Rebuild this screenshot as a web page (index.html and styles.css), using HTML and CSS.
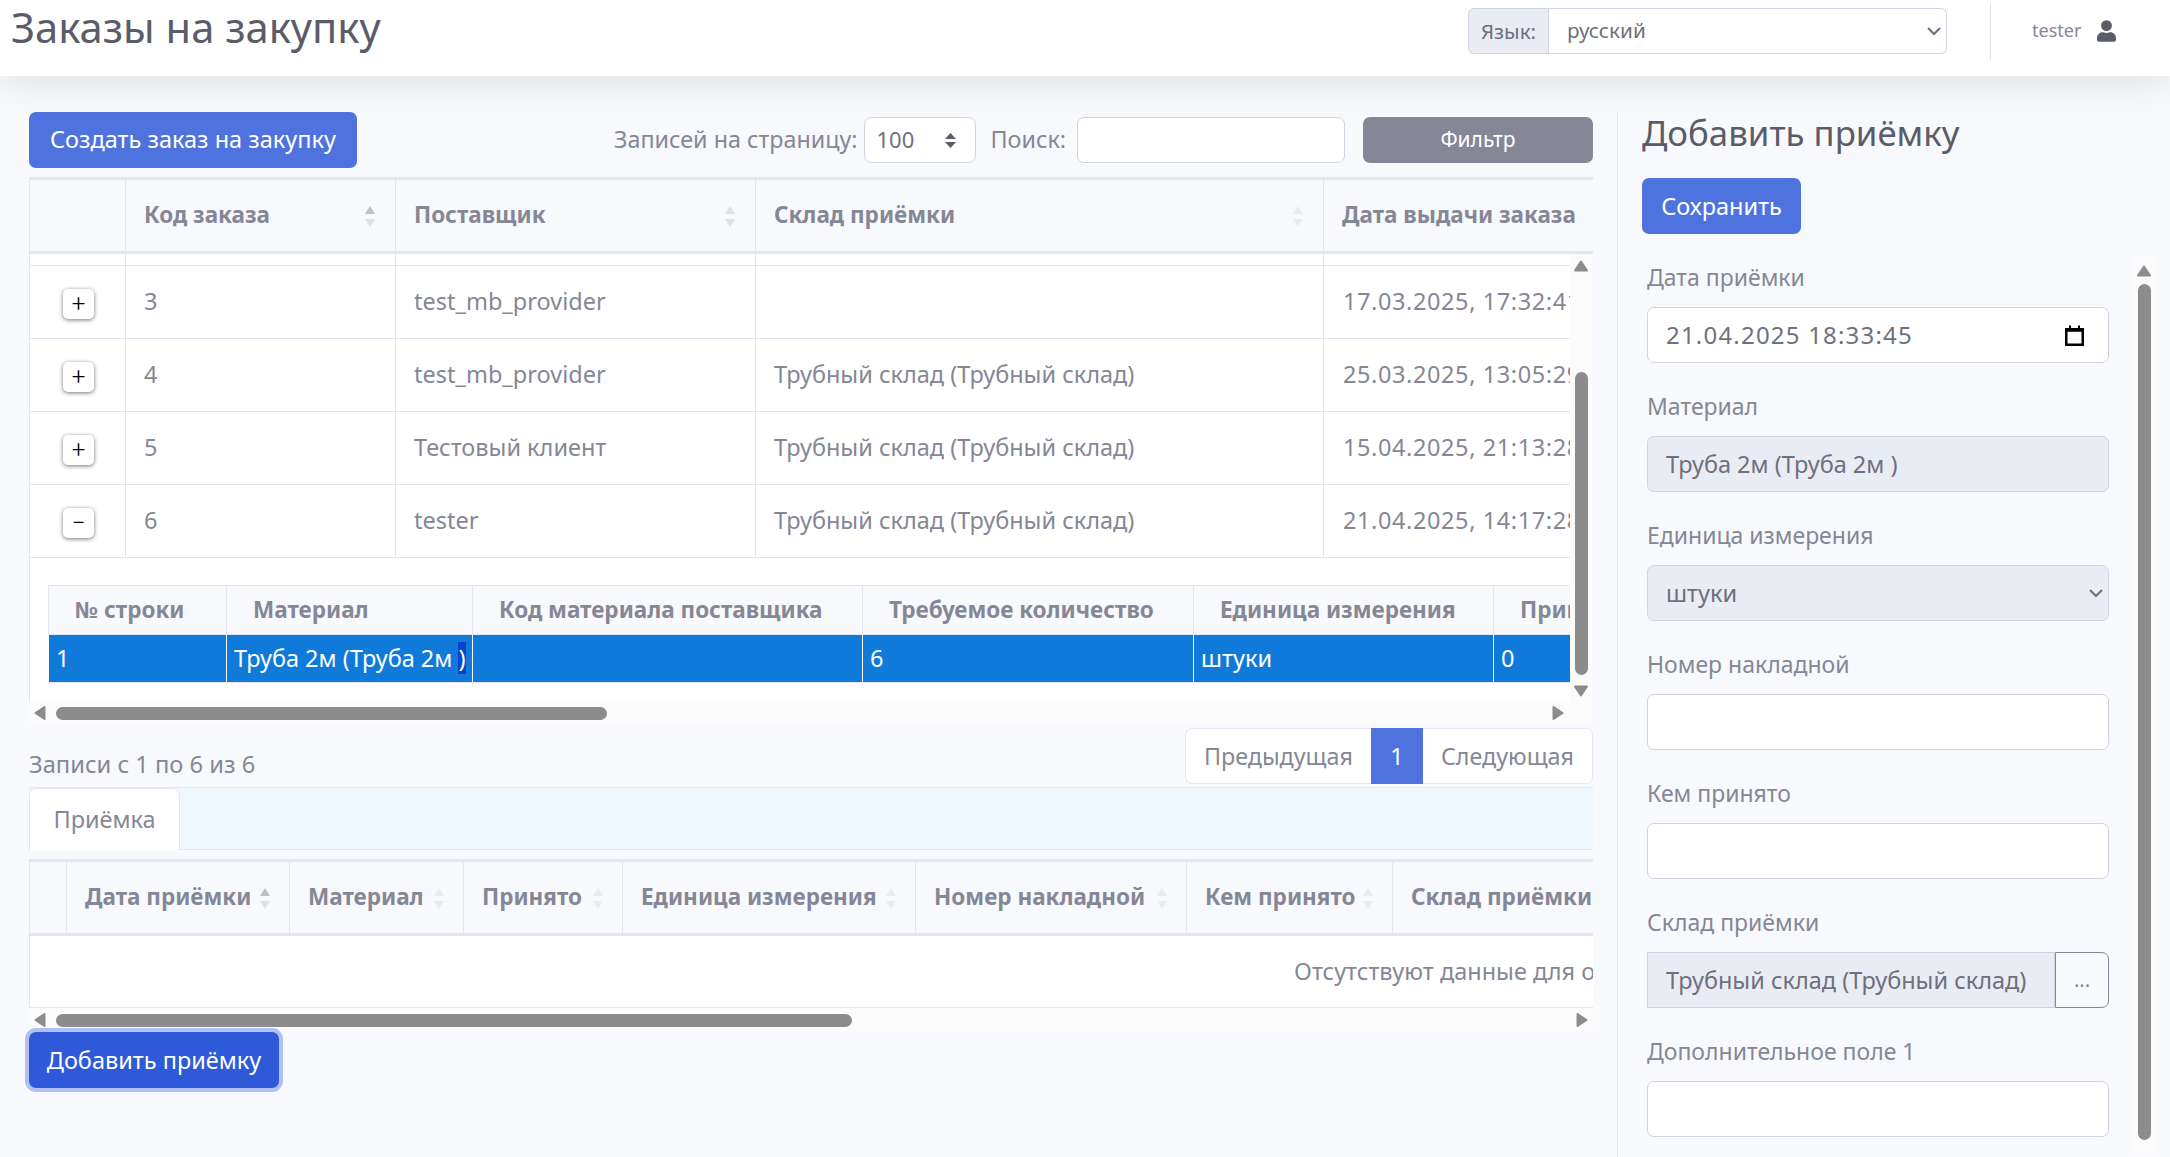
FILE: index.html
```html
<!DOCTYPE html>
<html lang="ru">
<head>
    <meta charset="UTF-8">
    <title>Заказы на закупку</title>
    <link rel="stylesheet" href="styles.css">
</head>
<body>
    <svg class="sprite">
        <symbol id="tri" viewBox="0 0 16 16"><path d="M8 3.500 14 12.500H2z" fill="#8c8c8c" stroke="#8c8c8c" stroke-width="2" stroke-linejoin="round"/></symbol>
    </svg>

    <!-- Top bar -->
    <header class="topbar">
        <h1 class="page-title">Заказы на закупку</h1>
        <div class="lang-group">
            <label class="lang-label" for="lang">Язык:</label>
            <select id="lang" class="lang-select"><option>русский</option></select>
        </div>
        <div class="user-box">
            <span class="user-name">tester</span>
            <svg class="user-icon" viewBox="0 0 448 512"><path d="M224 256a128 128 0 1 0 0-256 128 128 0 0 0 0 256zm90 32h-17a174 174 0 0 1-146 0h-17C60 288 0 348 0 422v42c0 26 22 48 48 48h352c26 0 48-22 48-48v-42c0-74-60-134-134-134z"/></svg>
        </div>
    </header>

    <div class="page">
        <main class="main-col">
            <!-- Toolbar -->
            <div class="toolbar">
                <button class="btn btn-primary btn-create">Создать заказ на закупку</button>
                <div class="tools">
                    <label class="tool-label" for="per-page">Записей на страницу:</label>
                    <div class="per-page-box">
                        <select id="per-page" class="per-page"><option>100</option></select>
                        <svg class="updown" viewBox="0 0 13 15"><path d="M6.500 0 12 6H1zM6.500 15 1 9H12z" fill="#5a5c69"/></svg>
                    </div>
                    <label class="tool-label search-label" for="search">Поиск:</label>
                    <input id="search" class="search" type="text">
                    <button class="btn btn-filter">Фильтр</button>
                </div>
            </div>

            <!-- Orders table -->
            <div class="table-head">
                <table class="grid orders">
                    <tr>
                        <th></th>
                        <th>Код заказа<span class="sort on"></span></th>
                        <th>Поставщик<span class="sort"></span></th>
                        <th>Склад приёмки<span class="sort faint"></span></th>
                        <th>Дата выдачи заказа</th>
                    </tr>
                </table>
            </div>
            <div class="scroll-body">
                <div class="clip orders-clip">
                    <table class="grid orders">
                        <tr class="cut"><td></td><td></td><td></td><td></td><td></td></tr>
                        <tr>
                            <td class="toggle-cell"><button class="toggle">+</button></td>
                            <td>3</td><td>test_mb_provider</td><td></td><td class="date-cell">17.03.2025, 17:32:41</td>
                        </tr>
                        <tr>
                            <td class="toggle-cell"><button class="toggle">+</button></td>
                            <td>4</td><td>test_mb_provider</td><td>Трубный склад (Трубный склад)</td><td class="date-cell">25.03.2025, 13:05:29</td>
                        </tr>
                        <tr>
                            <td class="toggle-cell"><button class="toggle">+</button></td>
                            <td>5</td><td>Тестовый клиент</td><td>Трубный склад (Трубный склад)</td><td class="date-cell">15.04.2025, 21:13:28</td>
                        </tr>
                        <tr>
                            <td class="toggle-cell"><button class="toggle">−</button></td>
                            <td>6</td><td>tester</td><td>Трубный склад (Трубный склад)</td><td class="date-cell">21.04.2025, 14:17:28</td>
                        </tr>
                        <tr>
                            <td class="detail" colspan="5">
                                <table class="lines">
                                    <tr>
                                        <th>№ строки</th><th>Материал</th><th>Код материала поставщика</th><th>Требуемое количество</th><th>Единица измерения</th><th>Принято</th>
                                    </tr>
                                    <tr class="picked">
                                        <td>1</td><td>Труба 2м (Труба 2м <span class="sel">)</span></td><td></td><td>6</td><td>штуки</td><td>0</td>
                                    </tr>
                                </table>
                            </td>
                        </tr>
                    </table>
                </div>
                <div class="vbar table-vbar">
                    <svg class="arrow"><use href="#tri"/></svg>
                    <div class="vthumb"></div>
                    <svg class="arrow down"><use href="#tri"/></svg>
                </div>
                <div class="hbar orders-bar">
                    <svg class="arrow left"><use href="#tri"/></svg>
                    <div class="hthumb orders-thumb"></div>
                    <svg class="arrow right"><use href="#tri"/></svg>
                </div>
                <div class="corner"></div>
            </div>

            <!-- Info and pagination -->
            <div class="table-foot">
                <div class="records">Записи с 1 по 6 из 6</div>
                <div class="pager">
                    <a class="page-link">Предыдущая</a>
                    <a class="page-link current">1</a>
                    <a class="page-link">Следующая</a>
                </div>
            </div>

            <!-- Tabs -->
            <div class="tabs"><a class="tab">Приёмка</a></div>

            <!-- Receipts table -->
            <div class="table-head receipts-head">
                <table class="grid receipts">
                    <tr>
                        <th></th>
                        <th>Дата приёмки<span class="sort on"></span></th>
                        <th>Материал<span class="sort faint"></span></th>
                        <th>Принято<span class="sort faint"></span></th>
                        <th>Единица измерения<span class="sort faint"></span></th>
                        <th>Номер накладной<span class="sort faint"></span></th>
                        <th>Кем принято<span class="sort faint"></span></th>
                        <th>Склад приёмки</th>
                    </tr>
                </table>
            </div>
            <div class="empty-box"><span class="empty-text">Отсутствуют данные для отображения</span></div>
            <div class="hbar receipts-bar">
                <svg class="arrow left"><use href="#tri"/></svg>
                <div class="hthumb receipts-thumb"></div>
                <svg class="arrow right"><use href="#tri"/></svg>
            </div>
            <button class="btn btn-add">Добавить приёмку</button>
        </main>

        <!-- Side form -->
        <aside class="side-col">
            <h2 class="side-title">Добавить приёмку</h2>
            <button class="btn btn-primary btn-save">Сохранить</button>
            <div class="side-scroll">
                <form class="side-form">
                    <div class="field">
                        <label>Дата приёмки</label>
                        <div class="control date-control">
                            <span class="date-text">21.04.2025 18:33:45</span>
                            <svg class="calendar" viewBox="0 0 19 21"><path d="M1.250 4.250h16.500v15.500H1.250zM1.250 5.500h16.500" fill="none" stroke="#000" stroke-width="2.500"/><path d="M5 0.500v3M14 0.500v3" stroke="#000" stroke-width="2"/></svg>
                        </div>
                    </div>
                    <div class="field">
                        <label>Материал</label>
                        <div class="control locked">Труба 2м (Труба 2м )</div>
                    </div>
                    <div class="field">
                        <label for="unit">Единица измерения</label>
                        <select id="unit" class="unit-select" disabled><option>штуки</option></select>
                    </div>
                    <div class="field">
                        <label for="invoice">Номер накладной</label>
                        <input id="invoice" class="control" type="text">
                    </div>
                    <div class="field">
                        <label for="taken">Кем принято</label>
                        <input id="taken" class="control" type="text">
                    </div>
                    <div class="field">
                        <label>Склад приёмки</label>
                        <div class="input-row">
                            <div class="control locked store">Трубный склад (Трубный склад)</div>
                            <button type="button" class="pick">...</button>
                        </div>
                    </div>
                    <div class="field">
                        <label for="extra">Дополнительное поле 1</label>
                        <input id="extra" class="control" type="text">
                    </div>
                </form>
                <div class="vbar form-vbar">
                    <svg class="arrow"><use href="#tri"/></svg>
                    <div class="vthumb"></div>
                </div>
            </div>
        </aside>
    </div>
</body>
</html>
```

FILE: styles.css
```css
* {
    box-sizing: border-box;
}

html,
body {
    height: 100%;
}

body {
    margin: 0;
    overflow: hidden;
    background-color: #f8f9fc;
    color: #858796;
    font-family: "Noto Sans", sans-serif;
    font-size: 23.5px;
    line-height: 1.5;
}

.sprite {
    display: none;
}

/* top bar */
.topbar {
    height: 76px;
    display: flex;
    align-items: flex-start;
    background-color: #fff;
    box-shadow: 0 3px 38px rgba(58, 59, 69, 0.15);
    position: relative;
}

.page-title {
    margin: 0 auto 0 11px;
    font-size: 41.7px;
    font-weight: 400;
    line-height: 54px;
    color: #5a5c69;
}

.lang-group {
    display: flex;
    width: 479px;
    height: 46px;
    margin-top: 8px;
}

.lang-label {
    width: 81px;
    display: flex;
    align-items: center;
    justify-content: center;
    background-color: #eaecf4;
    border: 1px solid #d1d3e2;
    border-radius: 6px 0 0 6px;
    color: #6e707e;
    font-size: 20.5px;
}

/* native selects keep their own arrow, zoomed up to the page scale */
.lang-select {
    zoom: 1.5;
    flex: 1;
    padding: 0 0 1px 8px;
    background-color: #fff;
    border: 1px solid #d1d3e2;
    border-left: 0;
    border-radius: 0 4px 4px 0;
    color: #6e707e;
    font-family: inherit;
    font-size: 13.8px;
}

.user-box {
    width: 180px;
    height: 57px;
    margin: 3px 0 0 43px;
    padding: 0 0 2px 41px;
    display: flex;
    align-items: center;
    border-left: 1px solid #dfe0ea;
}

.user-name {
    font-size: 18px;
}

.user-icon {
    width: 19px;
    height: 22px;
    margin-left: 16px;
    fill: #5a5c69;
}

/* page columns */
.page {
    display: flex;
    height: 1081px;
    padding: 36px 15px 0 29px;
}

.main-col {
    width: 1564px;
}

.side-col {
    width: 538px;
    margin-left: 24px;
    padding-left: 24px;
    border-left: 1px solid #e3e6f0;
}

/* buttons */
.btn {
    border: 0;
    border-radius: 7px;
    color: #fff;
    font-family: inherit;
    font-size: 23.5px;
}

.btn-primary {
    background-color: #4e73df;
}

.btn-create {
    width: 328px;
    height: 56px;
    padding: 0 0 2px;
}

.btn-filter {
    width: 230px;
    height: 46px;
    margin-left: 18px;
    padding: 0 0 2px;
    background-color: #858796;
    font-size: 21px;
}

.btn-add {
    display: block;
    width: 250px;
    height: 56px;
    background-color: #2e59d9;
    box-shadow: 0 0 0 4px rgba(105, 136, 228, 0.5);
}

.btn-save {
    display: block;
    width: 159px;
    height: 56px;
    margin-top: 24px;
}

/* toolbar */
.toolbar {
    display: flex;
    justify-content: space-between;
    height: 65px;
}

.tools {
    display: flex;
    align-items: center;
    height: 46px;
    margin-top: 5px;
    font-size: 23.3px;
}

.tool-label {
    padding-bottom: 2px;
}

.per-page-box {
    position: relative;
    margin-left: 6px;
}

.per-page {
    display: block;
    width: 112px;
    height: 46px;
    padding: 0 0 2px 12px;
    appearance: none;
    background-color: #fff;
    border: 1px solid #d1d3e2;
    border-radius: 7px;
    color: #6e707e;
    font-family: inherit;
    font-size: 22px;
}

.updown {
    position: absolute;
    top: 16px;
    right: 19px;
    width: 13px;
    height: 15px;
}

.search-label {
    margin-left: 15px;
}

.search {
    width: 268px;
    height: 46px;
    margin-left: 11px;
    background-color: #fff;
    border: 1px solid #d1d3e2;
    border-radius: 7px;
}

/* tables */
.grid {
    border-collapse: separate;
    border-spacing: 0;
    table-layout: fixed;
}

.grid th,
.grid td {
    padding: 0 0 0 18px;
    border-left: 1px solid #e3e6f0;
    white-space: nowrap;
    text-align: left;
    position: relative;
}

.grid th {
    height: 72px;
    padding-bottom: 2px;
    font-weight: 700;
    font-size: 22.5px;
}

.grid td {
    height: 73px;
    background-color: #fff;
    border-bottom: 1px solid #e3e6f0;
}

.orders {
    width: 1694px;
}

.orders th:nth-child(1),
.orders td:nth-child(1) {
    width: 96px;
}

.orders th:nth-child(2),
.orders td:nth-child(2) {
    width: 270px;
}

.orders th:nth-child(3),
.orders td:nth-child(3) {
    width: 360px;
}

.orders th:nth-child(4),
.orders td:nth-child(4) {
    width: 568px;
}

.orders th:nth-child(5),
.orders td:nth-child(5) {
    width: 400px;
}

.grid td.date-cell {
    padding-left: 19px;
    letter-spacing: 0.6px;
}

.table-head {
    overflow: hidden;
    height: 77px;
    border-top: 3px solid #e3e6f0;
    border-bottom: 3px solid #e3e6f0;
}

.scroll-body {
    display: grid;
    grid-template-columns: 1541px 22px;
    grid-template-rows: 448px 22px;
}

.clip {
    overflow: hidden;
}

.grid tr.cut td {
    height: 12px;
}

.grid td.toggle-cell {
    padding: 0;
    text-align: center;
}

.toggle {
    display: block;
    width: 31px;
    height: 30px;
    margin: 4px auto 0 33px;
    padding: 0;
    background-color: #fff;
    border: 0;
    border-radius: 5px;
    box-shadow: 0 1px 4px rgba(0, 0, 0, 0.55);
    color: #000;
    font-family: Roboto, sans-serif;
    font-size: 24px;
    font-weight: 300;
    line-height: 30px;
}

/* nested lines table */
.grid td.detail {
    height: 145px;
    padding: 27px 0 21px 18px;
}

.lines {
    width: 1600px;
    border-collapse: collapse;
    table-layout: fixed;
}

.lines th,
.lines td {
    padding: 0 0 0 26px;
    white-space: nowrap;
    text-align: left;
    border: 1px solid #e3e6f0;
}

.lines th {
    height: 49px;
    background-color: #f8f9fc;
    font-size: 22.5px;
    font-weight: 700;
}

.lines td {
    height: 48px;
    padding-left: 7px;
    background-color: #0f7ad9;
    border-left-color: #fff;
    border-right-color: #fff;
    color: #fff;
}

.lines th:nth-child(1) {
    width: 178px;
}

.lines th:nth-child(2) {
    width: 246px;
}

.lines th:nth-child(3) {
    width: 390px;
}

.lines th:nth-child(4) {
    width: 331px;
}

.lines th:nth-child(5) {
    width: 300px;
}

.sel {
    background-color: #0645c8;
}

/* sort arrows */
.sort {
    position: absolute;
    top: 26px;
    right: 20px;
    width: 10px;
    height: 21px;
}

.sort::before,
.sort::after {
    content: "";
    position: absolute;
    left: 0;
    border-left: 5px solid transparent;
    border-right: 5px solid transparent;
}

.sort::before {
    top: 0;
    border-bottom: 8px solid #e0e1e8;
}

.sort::after {
    bottom: 0;
    border-top: 8px solid #e0e1e8;
}

.sort.on::before {
    border-bottom-color: #bdbec8;
}

.sort.faint::before,
.sort.faint::after {
    border-bottom-color: #eaebf1;
    border-top-color: #eaebf1;
}

/* scrollbars */
.arrow {
    display: block;
    width: 16px;
    height: 16px;
    flex: none;
}

.arrow.down {
    transform: rotate(180deg);
}

.arrow.left {
    transform: rotate(-90deg);
}

.arrow.right {
    transform: rotate(90deg);
}

.vbar {
    display: flex;
    flex-direction: column;
    align-items: center;
    background-color: #fbfbfc;
}

.table-vbar {
    padding-top: 4px;
}

.vthumb {
    width: 13px;
    background-color: #8c8c8c;
    border-radius: 7px;
}

.table-vbar .vthumb {
    height: 303px;
    margin: 98px 0 8px;
}

.hbar {
    display: flex;
    align-items: center;
    height: 22px;
    padding: 0 3px;
    background-color: #fbfbfc;
}

.orders-bar {
    padding-right: 4px;
}

.hbar .arrow.right {
    margin-left: auto;
}

.hthumb {
    height: 13px;
    margin-left: 8px;
    background-color: #8c8c8c;
    border-radius: 7px;
}

.orders-thumb {
    width: 551px;
}

.corner {
    background-color: #fbfbfc;
}

/* footer of the orders table */
.table-foot {
    display: flex;
    justify-content: space-between;
    height: 63px;
    padding-top: 4px;
}

.records {
    padding-top: 19px;
    font-size: 23.7px;
}

.pager {
    display: flex;
    height: 56px;
    background-color: #fff;
    border: 1px solid #e3e6f0;
    border-radius: 7px;
    font-size: 23.3px;
}

.page-link {
    display: flex;
    align-items: center;
    padding: 0 18px;
}

.page-link.current {
    width: 52px;
    margin: -1px 0;
    justify-content: center;
    background-color: #4e73df;
    color: #fff;
}

/* tabs */
.tabs {
    height: 63px;
    margin-bottom: 9px;
    background-color: #eff7ff;
    border-top: 1px solid #e3e6f0;
    border-bottom: 1px solid #e3e6f0;
}

.tab {
    display: flex;
    align-items: center;
    justify-content: center;
    width: 151px;
    height: 62px;
    background-color: #fff;
    border: 1px solid #e3e6f0;
    border-bottom: 0;
    border-radius: 7px 7px 0 0;
}

/* receipts table */
.receipts {
    width: 1700px;
}

.receipts th:nth-child(1) {
    width: 37px;
}

.receipts th:nth-child(2) {
    width: 223px;
}

.receipts th:nth-child(3) {
    width: 174px;
}

.receipts th:nth-child(4) {
    width: 159px;
}

.receipts th:nth-child(5) {
    width: 293px;
}

.receipts th:nth-child(6) {
    width: 271px;
}

.receipts th:nth-child(7) {
    width: 206px;
}

.receipts .sort {
    top: 26px;
    right: 19px;
}

.empty-box {
    height: 72px;
    padding: 18px 0 0 1264px;
    overflow: hidden;
    white-space: nowrap;
    background-color: #fff;
    border-left: 1px solid #e3e6f0;
    border-bottom: 1px solid #e3e6f0;
}

.receipts-bar {
    height: 24px;
}

.receipts-thumb {
    width: 796px;
}

/* side form */
.side-title {
    margin: 0;
    font-size: 34.8px;
    font-weight: 400;
    line-height: 42px;
    color: #5a5c69;
}

.side-scroll {
    display: flex;
    justify-content: space-between;
    height: 898px;
    margin-top: 23px;
    overflow: hidden;
}

.side-form {
    width: 467px;
    padding: 4px 0 0 5px;
}

.form-vbar {
    width: 22px;
    padding-top: 6px;
}

.form-vbar .vthumb {
    height: 856px;
    margin-top: 5px;
}

.field {
    margin-bottom: 27px;
}

.field label {
    display: block;
    height: 35px;
    margin-bottom: 11px;
    font-size: 23px;
    line-height: 33px;
}

.control {
    display: block;
    width: 100%;
    height: 56px;
    padding: 0 18px;
    background-color: #fff;
    border: 1px solid #d1d3e2;
    border-radius: 7px;
    color: #6e707e;
    font-family: inherit;
    font-size: 23.5px;
    line-height: 54px;
}

.locked {
    background-color: #eaecf4;
}

.unit-select {
    zoom: 1.5;
    display: block;
    width: 100%;
    height: 37.3px;
    padding-left: 8px;
    background-color: #eaecf4;
    border: 1px solid #d1d3e2;
    border-radius: 4.7px;
    color: #6e707e;
    font-family: inherit;
    font-size: 15.7px;
    opacity: 1;
}

.date-control {
    display: flex;
    justify-content: space-between;
    align-items: center;
    padding-right: 24px;
}

.date-text {
    font-size: 24px;
    letter-spacing: 1.2px;
}

.calendar {
    width: 19px;
    height: 21px;
}

.input-row {
    display: flex;
}

.store {
    flex: 1;
    border-radius: 0;
}

.pick {
    width: 54px;
    height: 56px;
    padding: 0;
    background: transparent;
    border: 1px solid #858796;
    border-radius: 0 7px 7px 0;
    color: #858796;
    font-family: inherit;
    font-size: 20px;
}
```
